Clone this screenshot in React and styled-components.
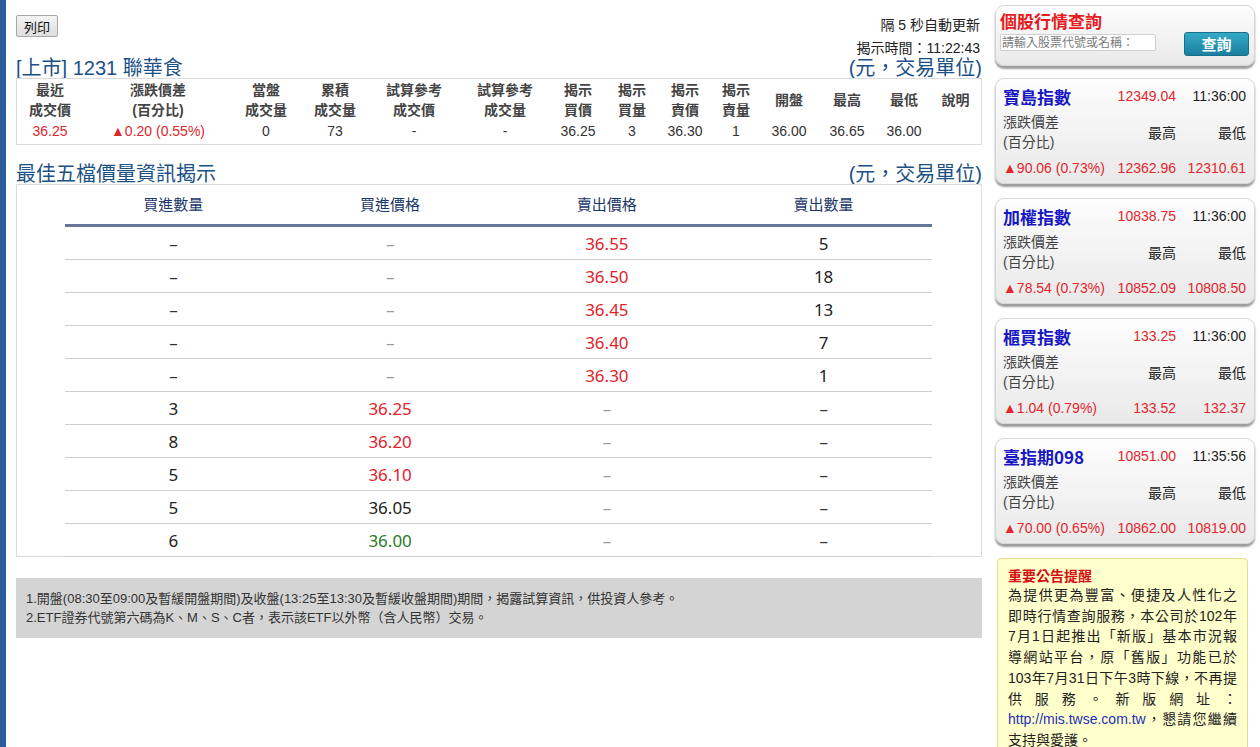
import React from "react";
import styled, { createGlobalStyle } from "styled-components";

const GlobalStyle = createGlobalStyle`
  html, body {
    margin: 0;
    padding: 0;
    background: #fff;
    overflow: hidden;
  }
  body {
    font-family: "Liberation Sans", "Noto Sans CJK TC", sans-serif;
    color: #333;
  }
`;

const quoteCols = [
  { w: 66, head: ["最近", "成交價"], value: "36.25", up: true },
  { w: 150, head: ["漲跌價差", "(百分比)"], value: "▲0.20 (0.55%)", up: true },
  { w: 66, head: ["當盤", "成交量"], value: "0" },
  { w: 72, head: ["累積", "成交量"], value: "73" },
  { w: 86, head: ["試算參考", "成交價"], value: "-" },
  { w: 96, head: ["試算參考", "成交量"], value: "-" },
  { w: 50, head: ["揭示", "買價"], value: "36.25" },
  { w: 58, head: ["揭示", "買量"], value: "3" },
  { w: 48, head: ["揭示", "賣價"], value: "36.30" },
  { w: 54, head: ["揭示", "賣量"], value: "1" },
  { w: 52, head: ["開盤"], value: "36.00" },
  { w: 64, head: ["最高"], value: "36.65" },
  { w: 50, head: ["最低"], value: "36.00" },
  { w: 53, head: ["說明"], value: "" },
];

const DASH = "–";

const fiveRows = [
  [DASH, DASH, "36.55", "5"],
  [DASH, DASH, "36.50", "18"],
  [DASH, DASH, "36.45", "13"],
  [DASH, DASH, "36.40", "7"],
  [DASH, DASH, "36.30", "1"],
  ["3", "36.25", DASH, DASH],
  ["8", "36.20", DASH, DASH],
  ["5", "36.10", DASH, DASH],
  ["5", "36.05", DASH, DASH],
  ["6", "36.00", DASH, DASH],
];

// reference price is 36.05: above red, below green
const priceTone = (v) => {
  if (v === DASH) return "dash";
  const n = parseFloat(v);
  if (n > 36.05) return "up";
  if (n < 36.05) return "down";
  return "flat";
};

const indices = [
  {
    name: "寶島指數",
    value: "12349.04",
    time: "11:36:00",
    change: "▲90.06 (0.73%)",
    high: "12362.96",
    low: "12310.61",
  },
  {
    name: "加權指數",
    value: "10838.75",
    time: "11:36:00",
    change: "▲78.54 (0.73%)",
    high: "10852.09",
    low: "10808.50",
  },
  {
    name: "櫃買指數",
    value: "133.25",
    time: "11:36:00",
    change: "▲1.04 (0.79%)",
    high: "133.52",
    low: "132.37",
  },
  {
    name: "臺指期098",
    value: "10851.00",
    time: "11:35:56",
    change: "▲70.00 (0.65%)",
    high: "10862.00",
    low: "10819.00",
  },
];

const App = () => {
  return (
    <>
      <GlobalStyle />
      <Page>
        <Main>
          <TopRow>
            <PrintButton>列印</PrintButton>
            <UpdateInfo>
              <div>隔 5 秒自動更新</div>
              <div>揭示時間：11:22:43</div>
            </UpdateInfo>
          </TopRow>

          <TitleRow>
            <span>[上市] 1231 聯華食</span>
            <span>(元，交易單位)</span>
          </TitleRow>
          <QuoteBox>
            <QuoteGrid $cols={quoteCols.map((c) => `${c.w}px`).join(" ")}>
              {quoteCols.map((c, i) => (
                <QuoteHead key={"h" + i}>
                  {c.head.map((line) => (
                    <div key={line}>{line}</div>
                  ))}
                </QuoteHead>
              ))}
              {quoteCols.map((c, i) => (
                <QuoteCell key={"d" + i} $up={c.up}>
                  {c.value}
                </QuoteCell>
              ))}
            </QuoteGrid>
          </QuoteBox>

          <TitleRow $gap>
            <span>最佳五檔價量資訊揭示</span>
            <span>(元，交易單位)</span>
          </TitleRow>
          <FiveBox>
            <FiveTable>
              <FiveHeadRow>
                <FiveHead>買進數量</FiveHead>
                <FiveHead>買進價格</FiveHead>
                <FiveHead>賣出價格</FiveHead>
                <FiveHead>賣出數量</FiveHead>
              </FiveHeadRow>
              {fiveRows.map((r, i) => (
                <FiveRow key={i}>
                  <FiveCell $tone={r[0] === DASH ? "qtyDash" : "flat"}>
                    {r[0]}
                  </FiveCell>
                  <FiveCell $tone={priceTone(r[1])}>{r[1]}</FiveCell>
                  <FiveCell $tone={r[2] === DASH ? "dash" : "up"}>
                    {r[2]}
                  </FiveCell>
                  <FiveCell $tone={r[3] === DASH ? "qtyDash" : "flat"}>
                    {r[3]}
                  </FiveCell>
                </FiveRow>
              ))}
            </FiveTable>
          </FiveBox>

          <NoteBox>
            <div>
              1.開盤(08:30至09:00及暫緩開盤期間)及收盤(13:25至13:30及暫緩收盤期間)期間，揭露試算資訊，供投資人參考。
            </div>
            <div>
              2.ETF證券代號第六碼為K、M、S、C者，表示該ETF以外幣（含人民幣）交易。
            </div>
          </NoteBox>
        </Main>

        <Sidebar>
          <SearchCard>
            <SearchLeft>
              <SearchTitle>個股行情查詢</SearchTitle>
              <SearchInput placeholder="請輸入股票代號或名稱：" />
            </SearchLeft>
            <SearchButton>查詢</SearchButton>
          </SearchCard>

          {indices.map((idx) => (
            <IndexCard key={idx.name}>
              <IndexName>{idx.name}</IndexName>
              <IndexNum $red>{idx.value}</IndexNum>
              <IndexNum>{idx.time}</IndexNum>

              <IndexLabel>
                <div>漲跌價差</div>
                <div>(百分比)</div>
              </IndexLabel>
              <IndexNum>最高</IndexNum>
              <IndexNum>最低</IndexNum>

              <IndexChange>{idx.change}</IndexChange>
              <IndexNum $red>{idx.high}</IndexNum>
              <IndexNum $red>{idx.low}</IndexNum>
            </IndexCard>
          ))}

          <Notice>
            <NoticeTitle>重要公告提醒</NoticeTitle>
            <NoticeLine>為提供更為豐富、便捷及人性化之</NoticeLine>
            <NoticeLine>即時行情查詢服務，本公司於102年</NoticeLine>
            <NoticeLine>7月1日起推出「新版」基本市況報</NoticeLine>
            <NoticeLine>導網站平台，原「舊版」功能已於</NoticeLine>
            <NoticeLine>103年7月31日下午3時下線，不再提</NoticeLine>
            <NoticeLine>供 服 務 。 新 版 網 址 ：</NoticeLine>
            <NoticeLine>
              <NoticeLink>http://mis.twse.com.tw</NoticeLink>，懇請您繼續
            </NoticeLine>
            <NoticeLine $last>支持與愛護。</NoticeLine>
          </Notice>
        </Sidebar>
      </Page>
    </>
  );
};

export default App;

const Page = styled.div`
  display: flex;
  gap: 13px;
  height: 747px;
  overflow: hidden;
  border-left: 6px solid #2a5c9e;
  padding-left: 10px;
  box-sizing: border-box;
`;

const Main = styled.div`
  width: 966px;
  flex-shrink: 0;
  display: flex;
  flex-direction: column;
`;

const TopRow = styled.div`
  height: 58px;
  flex-shrink: 0;
  display: flex;
  justify-content: space-between;
  align-items: flex-start;
`;

const PrintButton = styled.button`
  margin-top: 15px;
  width: 42px;
  height: 22px;
  padding: 0;
  font-family: "Liberation Sans", "Noto Sans CJK TC", sans-serif;
  font-size: 13px;
  color: #111;
  background: linear-gradient(#f4f4f4, #dedede);
  border: 1px solid #a8a8a8;
  border-radius: 2px;
`;

const UpdateInfo = styled.div`
  padding-top: 14px;
  padding-right: 2px;
  text-align: right;
  font-size: 14px;
  line-height: 23px;
  color: #222;
`;

const TitleRow = styled.div`
  margin-top: ${(p) => (p.$gap ? "19px" : "0")};
  height: 20px;
  flex-shrink: 0;
  display: flex;
  justify-content: space-between;
  align-items: flex-end;
  font-size: 20px;
  line-height: 20px;
  color: #1c5186;
  white-space: nowrap;
`;

const QuoteBox = styled.div`
  border: 1px solid #dcdcdc;
  height: 64px;
  flex-shrink: 0;
  padding-top: 1px;
`;

const QuoteGrid = styled.div`
  display: grid;
  grid-template-columns: ${(p) => p.$cols};
  grid-template-rows: 40px 22px;
`;

const QuoteHead = styled.div`
  display: flex;
  flex-direction: column;
  justify-content: center;
  align-items: center;
  font-size: 14px;
  line-height: 20px;
  font-weight: bold;
  color: #444;
  white-space: nowrap;
`;

const QuoteCell = styled.div`
  text-align: center;
  font-size: 14px;
  line-height: 22px;
  color: ${(p) => (p.$up ? "#e0262b" : "#333")};
  white-space: nowrap;
`;

const FiveBox = styled.div`
  border: 1px solid #dcdcdc;
  height: 371px;
  flex-shrink: 0;
`;

const FiveTable = styled.div`
  width: 867px;
  margin-left: 48px;
`;

const FiveHeadRow = styled.div`
  display: grid;
  grid-template-columns: repeat(4, 1fr);
  height: 39px;
  border-bottom: 3px solid #67779a;
  align-items: center;
`;

const FiveHead = styled.div`
  text-align: center;
  font-size: 15px;
  color: #1a3768;
  padding-bottom: 2px;
`;

const FiveRow = styled.div`
  display: grid;
  grid-template-columns: repeat(4, 1fr);
  height: 32px;
  border-bottom: 1px solid #cfcfcf;
  align-items: center;
`;

const toneColor = {
  up: "#e3232a",
  down: "#2a7a2a",
  flat: "#222",
  dash: "#9a9a9a",
  qtyDash: "#333",
};

const FiveCell = styled.div`
  text-align: center;
  font-family: "Noto Sans", "Noto Sans CJK TC", sans-serif;
  font-size: 17px;
  color: ${(p) => toneColor[p.$tone]};
`;

const NoteBox = styled.div`
  margin-top: 21px;
  flex-shrink: 0;
  background: #d4d4d4;
  padding: 11px 10px 11px 10px;
  font-size: 13px;
  line-height: 19px;
  color: #333;
`;

const Sidebar = styled.div`
  width: 260px;
  flex-shrink: 0;
  padding-top: 5px;
  display: flex;
  flex-direction: column;
`;

const Card = styled.div`
  flex-shrink: 0;
  box-sizing: border-box;
  background: linear-gradient(#fdfdfd, #e9e9e9);
  border: 1px solid #d6d6d6;
  border-radius: 9px;
  box-shadow: 0 3px 2px #9c9c9c;
`;

const SearchCard = styled(Card)`
  height: 61px;
  padding: 3px 5px 6px 4px;
  margin-bottom: 12px;
  display: flex;
  justify-content: space-between;
  align-items: flex-end;
`;

const SearchLeft = styled.div`
  display: flex;
  flex-direction: column;
  gap: 2px;
  align-self: flex-start;
`;

const SearchTitle = styled.div`
  font-family: "Noto Sans CJK TC", sans-serif;
  font-size: 17px;
  line-height: 23px;
  font-weight: bold;
  color: #e51b1f;
`;

const SearchInput = styled.input`
  width: 156px;
  height: 17px;
  box-sizing: border-box;
  border: 1px solid #cfcfcf;
  border-radius: 2px;
  padding: 0 1px;
  font-family: "Liberation Sans", "Noto Sans CJK TC", sans-serif;
  font-size: 12px;
  background: #fff;
  &::placeholder {
    color: #7a7a7a;
  }
`;

const SearchButton = styled.button`
  width: 65px;
  height: 24px;
  margin-bottom: 3px;
  border: 1px solid #16708c;
  border-radius: 3px;
  background: linear-gradient(#35a9c6, #1a809f);
  color: #fff;
  font-family: "Noto Sans CJK TC", sans-serif;
  font-size: 15px;
  font-weight: bold;
  padding: 0;
  line-height: 20px;
`;

const IndexCard = styled(Card)`
  height: 106px;
  margin-bottom: 14px;
  padding: 6px 8px 0 7px;
  display: grid;
  grid-template-columns: 1fr 66px 70px;
  grid-template-rows: 22px 40px 22px;
  row-gap: 5px;
  align-items: center;
`;

const IndexName = styled.div`
  font-family: "Noto Sans CJK TC", sans-serif;
  font-size: 17px;
  font-weight: bold;
  color: #1717c4;
  white-space: nowrap;
`;

const IndexNum = styled.div`
  text-align: right;
  font-size: 14px;
  color: ${(p) => (p.$red ? "#e3262b" : "#222")};
  white-space: nowrap;
`;

const IndexLabel = styled.div`
  font-size: 14px;
  line-height: 20px;
  color: #444;
`;

const IndexChange = styled.div`
  font-size: 14px;
  color: #e3262b;
  white-space: nowrap;
`;

const Notice = styled.div`
  flex-shrink: 0;
  margin-left: 2px;
  width: 251px;
  box-sizing: border-box;
  padding: 7px 10px 10px 10px;
  background: #ffffcc;
  border: 1px solid #e8d890;
  border-radius: 4px;
`;

const NoticeTitle = styled.div`
  font-family: "Noto Sans CJK TC", sans-serif;
  font-size: 14px;
  line-height: 19px;
  font-weight: bold;
  color: #d40f12;
`;

const NoticeLine = styled.div`
  font-size: 14px;
  line-height: 20.7px;
  color: #222;
  white-space: nowrap;
  text-align: justify;
  text-align-last: ${(p) => (p.$last ? "left" : "justify")};
`;

const NoticeLink = styled.span`
  color: #1d2fb8;
`;
